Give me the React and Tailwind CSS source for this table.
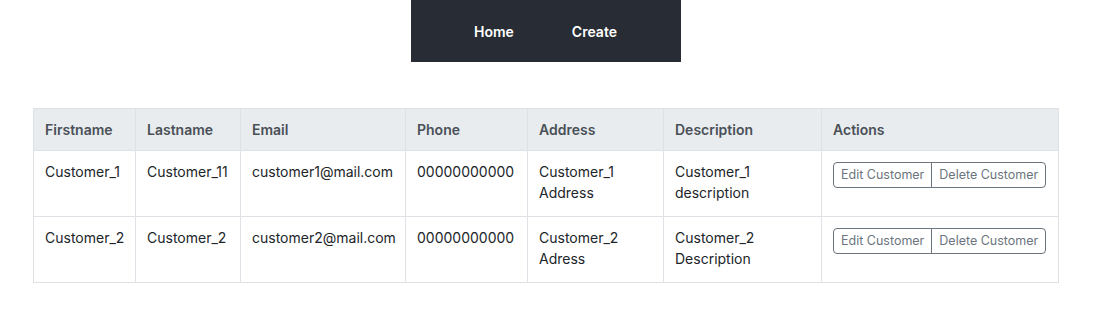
const customers = [
  {
    firstname: 'Customer_1',
    lastname: 'Customer_11',
    email: 'customer1@mail.com',
    phone: '00000000000',
    address: 'Customer_1 Address',
    description: 'Customer_1 description',
  },
  {
    firstname: 'Customer_2',
    lastname: 'Customer_2',
    email: 'customer2@mail.com',
    phone: '00000000000',
    address: 'Customer_2 Adress',
    description: 'Customer_2 Description',
  },
];

const headers = ['Firstname', 'Lastname', 'Email', 'Phone', 'Address', 'Description', 'Actions'];
const widths = ['w-[102px]', 'w-[105px]', 'w-[165px]', 'w-[122px]', 'w-[136px]', 'w-[158px]', 'w-[237px]'];

const cell = 'border border-[#dee2e6] px-[11px] pt-[10px] pb-3 align-top';

export default function App() {
  return (
    <div className="min-h-screen bg-white text-[14px] leading-[21px] text-[#212529] font-['Inter',_'Noto_Sans',_sans-serif]">
      {/* nav */}
      <div className="flex justify-center pr-[4px]">
        <nav className="flex h-[62px] w-[270px] items-center bg-[#282c34] pl-[63px] text-[14px] font-semibold text-white">
          <a className="mr-[58px]">Home</a>
          <a>Create</a>
        </nav>
      </div>

      {/* customers table */}
      <div className="ml-[33px] mt-[46px] w-[1025px]">
        <table className="w-full table-fixed border-collapse border border-[#dee2e6]">
          <colgroup>
            {widths.map((w, i) => (
              <col key={i} className={w} />
            ))}
          </colgroup>
          <thead>
            <tr className="bg-[#e9ecef] text-[#495057]">
              {headers.map((h) => (
                <th key={h} className="border border-[#dee2e6] px-[11px] py-[10px] text-left font-semibold">
                  {h}
                </th>
              ))}
            </tr>
          </thead>
          <tbody>
            {customers.map((c) => (
              <tr key={c.email} className="h-[66px]">
                <td className={cell}>{c.firstname}</td>
                <td className={cell}>{c.lastname}</td>
                <td className={cell}>{c.email}</td>
                <td className={cell}>{c.phone}</td>
                <td className={cell}>{c.address}</td>
                <td className={cell}>{c.description}</td>
                <td className="border border-[#dee2e6] px-[11px] pt-[11px] pb-3 align-top">
                  <div className="inline-flex whitespace-nowrap text-[12.5px] leading-[18px] text-[#6c757d]">
                    <button className="whitespace-nowrap rounded-l-[4px] border border-[#6c757d] px-[7px] py-[3px]">Edit Customer</button>
                    <button className="-ml-px whitespace-nowrap rounded-r-[4px] border border-[#6c757d] px-[7px] py-[3px]">Delete Customer</button>
                  </div>
                </td>
              </tr>
            ))}
          </tbody>
        </table>
      </div>
    </div>
  );
}
